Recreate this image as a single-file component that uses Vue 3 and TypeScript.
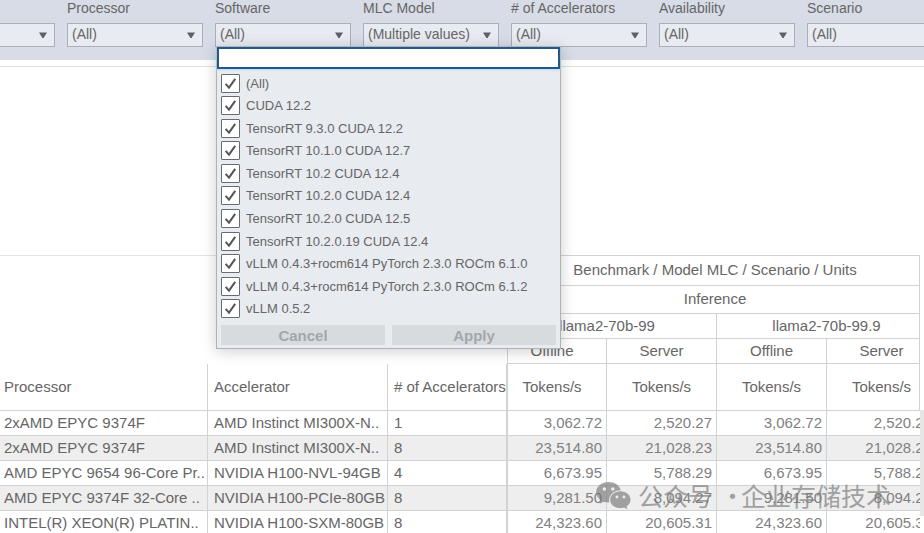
<script setup lang="ts">
import { ref } from 'vue'

interface Filter {
  id: string
  label: string
  value: string
}

interface Row {
  processor: string
  accelerator: string
  count: number
  results: string[]
}

const filters: Filter[] = [
  { id: 'organization', label: '', value: '' },
  { id: 'processor', label: 'Processor', value: '(All)' },
  { id: 'software', label: 'Software', value: '(All)' },
  { id: 'model', label: 'MLC Model', value: '(Multiple values)' },
  { id: 'accelerators', label: '# of Accelerators', value: '(All)' },
  { id: 'availability', label: 'Availability', value: '(All)' },
  { id: 'scenario', label: 'Scenario', value: '(All)' },
]

const options = [
  '(All)',
  'CUDA 12.2',
  'TensorRT 9.3.0 CUDA 12.2',
  'TensorRT 10.1.0 CUDA 12.7',
  'TensorRT 10.2 CUDA 12.4',
  'TensorRT 10.2.0 CUDA 12.4',
  'TensorRT 10.2.0 CUDA 12.5',
  'TensorRT 10.2.0.19 CUDA 12.4',
  'vLLM 0.4.3+rocm614 PyTorch 2.3.0 ROCm 6.1.0',
  'vLLM 0.4.3+rocm614 PyTorch 2.3.0 ROCm 6.1.2',
  'vLLM 0.5.2',
]

const search = ref<string>('')
const checked = ref<string[]>([...options])

const rows: Row[] = [
  { processor: '2xAMD EPYC 9374F', accelerator: 'AMD Instinct MI300X-N..', count: 1, results: ['3,062.72', '2,520.27', '3,062.72', '2,520.27'] },
  { processor: '2xAMD EPYC 9374F', accelerator: 'AMD Instinct MI300X-N..', count: 8, results: ['23,514.80', '21,028.23', '23,514.80', '21,028.23'] },
  { processor: 'AMD EPYC 9654 96-Core Pr..', accelerator: 'NVIDIA H100-NVL-94GB', count: 4, results: ['6,673.95', '5,788.29', '6,673.95', '5,788.29'] },
  { processor: 'AMD EPYC 9374F 32-Core ..', accelerator: 'NVIDIA H100-PCIe-80GB', count: 8, results: ['9,281.50', '8,094.27', '9,281.50', '8,094.27'] },
  { processor: 'INTEL(R) XEON(R) PLATIN..', accelerator: 'NVIDIA H100-SXM-80GB', count: 8, results: ['24,323.60', '20,605.31', '24,323.60', '20,605.31'] },
]
</script>

<template>
  <div class="page">
    <header class="filters">
      <div v-for="f in filters" :key="f.id" class="filter">
        <label class="filter-label" :for="f.id">{{ f.label }}</label>
        <div class="control">
          <select :id="f.id" class="select">
            <option>{{ f.value }}</option>
          </select>
          <svg class="arrow" viewBox="0 0 8 6" aria-hidden="true"><path d="M0 0.5H8L4.6 6H3.4Z" /></svg>

          <form v-if="f.id === 'software'" class="popup" @submit.prevent>
            <input v-model="search" class="search" type="text" aria-label="Search software" />
            <div class="options">
              <label v-for="o in options" :key="o" class="option">
                <span class="tick">
                  <input v-model="checked" type="checkbox" :value="o" />
                  <svg v-if="checked.includes(o)" viewBox="0 0 19 19" aria-hidden="true">
                    <path d="M4.600 9.800L8 13.600L14.200 4.800" />
                  </svg>
                </span>
                <span>{{ o }}</span>
              </label>
            </div>
            <div class="actions">
              <button type="button" disabled>Cancel</button>
              <button type="submit" disabled>Apply</button>
            </div>
          </form>
        </div>
      </div>
    </header>

    <main class="results">
      <div class="viewport">
        <table>
          <colgroup>
            <col class="c-processor" />
            <col class="c-accelerator" />
            <col class="c-count" />
            <col class="c-first" />
            <col class="c-value" />
            <col class="c-value" />
            <col class="c-value" />
          </colgroup>
          <thead>
            <tr class="r-title">
              <td class="corner" colspan="3" rowspan="4"></td>
              <th class="top wide" colspan="4">Benchmark / Model MLC / Scenario / Units</th>
            </tr>
            <tr class="r-group">
              <th class="wide" colspan="4">Inference</th>
            </tr>
            <tr class="r-sub">
              <th class="partial" colspan="2">llama2-70b-99</th>
              <th colspan="2">llama2-70b-99.9</th>
            </tr>
            <tr class="r-sub">
              <th class="partial">Offline</th>
              <th>Server</th>
              <th>Offline</th>
              <th>Server</th>
            </tr>
            <tr class="r-units">
              <th class="dim">Processor</th>
              <th class="dim">Accelerator</th>
              <th class="dim edge"># of Accelerators</th>
              <th class="partial">Tokens/s</th>
              <th>Tokens/s</th>
              <th>Tokens/s</th>
              <th>Tokens/s</th>
            </tr>
          </thead>
          <tbody>
            <tr v-for="(r, i) in rows" :key="i">
              <td>{{ r.processor }}</td>
              <td>{{ r.accelerator }}</td>
              <td class="edge">{{ r.count }}</td>
              <td v-for="(v, j) in r.results" :key="j" class="num">{{ v }}</td>
            </tr>
          </tbody>
        </table>
      </div>
      <div class="side">
        <div class="side-head"></div>
        <div class="thumb"></div>
      </div>

      <div class="watermark">
        <svg viewBox="0 0 36 30" aria-hidden="true">
          <path
            fill-rule="evenodd"
            d="M13 1C5.800 1 0 5.700 0 11.600C0 14.900 1.900 17.800 4.800 19.800L3.600 23.600L8.100 21.400C9.700 21.900 11.300 22.200 13 22.200L13.700 22.100C12.200 15.700 17.500 9.400 25.500 9.500C24.300 4.600 19.200 1 13 1ZM8.600 6.500A1.800 1.800 0 1 1 8.600 10.100A1.800 1.800 0 1 1 8.600 6.500ZM17.300 6.500A1.800 1.800 0 1 1 17.300 10.100A1.800 1.800 0 1 1 17.300 6.500Z"
          />
          <path
            fill-rule="evenodd"
            d="M25.200 10.600C19.200 10.600 14.600 14.500 14.600 19.300C14.600 24.100 19.200 28 25.200 28C26.500 28 27.700 27.800 28.900 27.400L32.400 29.300L31.500 26C34 24.400 35.600 22 35.600 19.300C35.600 14.500 31.100 10.600 25.200 10.600ZM21.600 15A1.500 1.500 0 1 1 21.600 18A1.500 1.500 0 1 1 21.600 15ZM28.800 15A1.500 1.500 0 1 1 28.800 18A1.500 1.500 0 1 1 28.800 15Z"
          />
        </svg>
        <span>公众号</span>
        <span class="dot">·</span>
        <span>企业存储技术</span>
      </div>
    </main>
  </div>
</template>

<style>
body {
  background: #fff;
  overflow: hidden;
}
</style>

<style scoped>
.page {
  font-family: 'Liberation Sans', Arial, sans-serif;
  font-size: 15px;
  color: #666;
}

.filters {
  display: grid;
  grid-template-columns: 55px repeat(5, minmax(136px, 1fr)) minmax(117px, 0.86fr);
  column-gap: 12px;
  height: 60px;
  background: #d7dce6;
  font-size: 14px;
}

.filter-label {
  display: block;
  height: 23px;
  line-height: 16px;
  white-space: nowrap;
}

.control {
  position: relative;
  display: grid;
  align-items: center;
}

.control > .select,
.control > .arrow {
  grid-area: 1 / 1;
}

.select {
  appearance: none;
  width: 100%;
  height: 24px;
  margin: 0;
  padding: 0 20px 2px 4px;
  border: 1px solid #a9afbb;
  border-radius: 0;
  background: #e8ebf1;
  color: #666;
  font: inherit;
}

.filter:first-child .select {
  border-left: 0;
}

.filter:last-child .select {
  border-right: 0;
}

.arrow {
  justify-self: end;
  width: 8px;
  height: 6px;
  margin-right: 8px;
  fill: #5d6068;
  pointer-events: none;
}

.filter:last-child .arrow {
  display: none;
}

.popup {
  position: absolute;
  z-index: 2;
  top: 23px;
  left: 1px;
  box-sizing: border-box;
  width: 345px;
  border: 1px solid #afb3b8;
  background: #e8ebf0;
  box-shadow: 0 2px 14px rgba(0, 0, 0, 0.2);
  font-size: 13px;
}

.search {
  display: block;
  box-sizing: border-box;
  width: 100%;
  height: 22px;
  padding: 0 4px;
  border: 2px solid #22598a;
  border-radius: 0;
  outline: 0;
  background: #fff;
  box-shadow: 0 1px 2px #b5dcf2;
  font: inherit;
}

.options {
  display: grid;
  grid-template-rows: repeat(11, 1fr);
  height: 248px;
  padding: 3px 4px 1px;
}

.option {
  display: flex;
  align-items: center;
  gap: 6px;
  white-space: nowrap;
}

.tick {
  display: grid;
  width: 19px;
  height: 19px;
}

.tick > * {
  grid-area: 1 / 1;
  width: 19px;
  height: 19px;
}

.tick input {
  appearance: none;
  box-sizing: border-box;
  margin: 0;
  border: 1px solid #686c72;
  border-radius: 1px;
  background: #fff;
}

.tick svg {
  fill: none;
  stroke: #555;
  stroke-width: 2;
  pointer-events: none;
}

.actions {
  display: grid;
  grid-template-columns: 1fr 1fr;
  gap: 7px;
  padding: 4px 4px 3px;
}

.actions button {
  height: 20px;
  padding: 0;
  border: 0;
  background: #d7dbde;
  color: #a3a7ab;
  font: bold 15px 'Liberation Sans', Arial, sans-serif;
}

.results {
  position: relative;
  display: flex;
  margin-top: 6px;
  padding-top: 188px;
  border-top: 1px solid #dce0e0;
}

.viewport {
  flex: 1;
  min-width: 0;
  overflow: hidden;
}

table {
  width: 937px;
  min-width: 100%;
  table-layout: fixed;
  border-collapse: separate;
  border-spacing: 0;
}

.c-processor {
  width: 208px;
}

.c-accelerator {
  width: 180px;
}

.c-count {
  width: 120px;
}

.c-first {
  width: 99px;
}

.c-value {
  width: 110px;
}

th,
td {
  box-sizing: border-box;
  padding: 0 0 2px;
  border-right: 1px solid #d0d3d3;
  border-bottom: 1px solid #d0d3d3;
  font-weight: normal;
  line-height: 17px;
  white-space: nowrap;
}

.corner {
  border-top: 1px solid #e2e4e4;
  border-bottom: 0;
}

.top {
  border-top: 1px solid #d0d3d3;
}

.wide {
  padding-right: 14px;
}

.partial {
  padding-right: 10px;
}

.dim {
  padding-left: 6px;
  text-align: left;
}

.dim:first-child,
tbody td:first-child {
  padding-left: 4px;
}

.edge {
  border-right-width: 2px;
}

.r-title {
  height: 31px;
}

.r-group {
  height: 28px;
}

.r-sub {
  height: 25px;
}

.r-units {
  height: 47px;
}

tbody tr {
  height: 25px;
}

tbody tr:nth-child(even) {
  background: #eee;
}

tbody td {
  padding-left: 6px;
}

tbody .num {
  padding-right: 4px;
  padding-left: 0;
  color: #808080;
  text-align: right;
}

.side {
  width: 4px;
}

.side-head {
  height: 155px;
  margin-left: -1px;
  border-left: 1px solid #d0d3d3;
}

.thumb {
  height: 106px;
  background: #e6e6e6;
}

.watermark {
  position: absolute;
  right: 33px;
  bottom: 26px;
  display: flex;
  align-items: center;
  gap: 7px;
  color: #777;
  font-family: 'Noto Sans CJK SC', sans-serif;
  font-size: 25px;
  line-height: 30px;
  opacity: 0.65;
  pointer-events: none;
}

.watermark svg {
  width: 35px;
  height: 29px;
  fill: #777;
}

.watermark .dot {
  width: 14px;
  text-align: center;
}
</style>
